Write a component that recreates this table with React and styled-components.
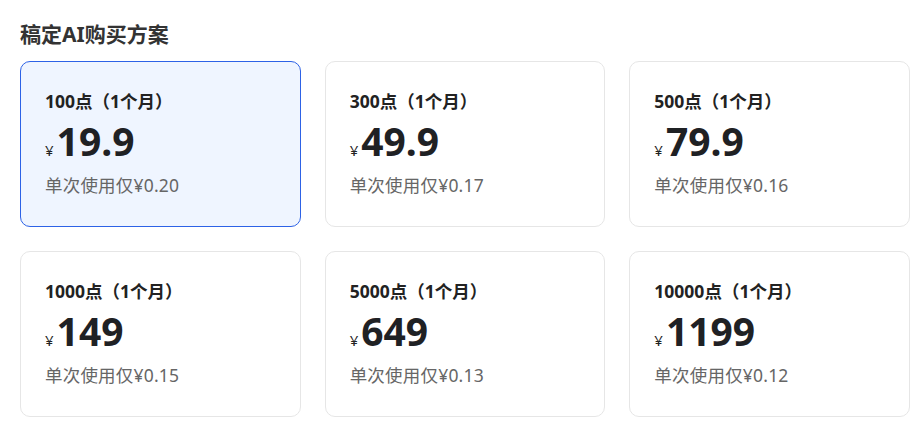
import React from 'react';
import styled, { createGlobalStyle } from 'styled-components';

const GlobalStyle = createGlobalStyle`
  body {
    margin: 0;
    background: #fff;
    font-family: "Noto Sans", "Noto Sans CJK SC", sans-serif;
    color: #222;
  }
`;

const Page = styled.div`
  padding: 19px 0 0 20px;
`;

const Title = styled.h2`
  margin: 0 0 12px;
  font-size: 21px;
  line-height: 30px;
  font-weight: 700;
  color: #333;
`;

const Grid = styled.div`
  display: grid;
  width: 890px;
  grid-template-columns: repeat(3, 1fr);
  column-gap: 24px;
  row-gap: 24px;
`;

const Card = styled.div`
  box-sizing: border-box;
  height: 166px;
  padding: 25px 24px 0;
  border-radius: 10px;
  border: 1px solid ${(p) => (p.$active ? '#2d62e6' : '#e6e6e6')};
  background: ${(p) => (p.$active ? '#eff5ff' : '#fff')};
  cursor: pointer;
`;

const Name = styled.div`
  font-size: 17.5px;
  font-weight: 700;
  line-height: 28px;
  color: #222;
`;

const Price = styled.div`
  display: flex;
  align-items: baseline;
  margin-top: 0;
  height: 52px;
`;

const Yen = styled.span`
  font-size: 15px;
  margin-right: 3px;
  color: #222;
`;

const Amount = styled.span`
  font-size: 39px;
  font-weight: 700;
  line-height: 52px;
  color: #1f2124;
`;

const Unit = styled.div`
  margin-top: 5px;
  font-size: 17.5px;
  letter-spacing: 0.2px;
  line-height: 26px;
  color: #666;
`;

const plans = [
  { name: '100点（1个月）', price: '19.9', unit: '0.20' },
  { name: '300点（1个月）', price: '49.9', unit: '0.17' },
  { name: '500点（1个月）', price: '79.9', unit: '0.16' },
  { name: '1000点（1个月）', price: '149', unit: '0.15' },
  { name: '5000点（1个月）', price: '649', unit: '0.13' },
  { name: '10000点（1个月）', price: '1199', unit: '0.12' },
];

export default function App() {
  const [selected, setSelected] = React.useState(0);

  return (
    <Page>
      <GlobalStyle />
      <Title>稿定AI购买方案</Title>
      <Grid>
        {plans.map((plan, i) => (
          <Card key={plan.name} $active={i === selected} onClick={() => setSelected(i)}>
            <Name>{plan.name}</Name>
            <Price>
              <Yen>¥</Yen>
              <Amount>{plan.price}</Amount>
            </Price>
            <Unit>单次使用仅¥{plan.unit}</Unit>
          </Card>
        ))}
      </Grid>
    </Page>
  );
}
